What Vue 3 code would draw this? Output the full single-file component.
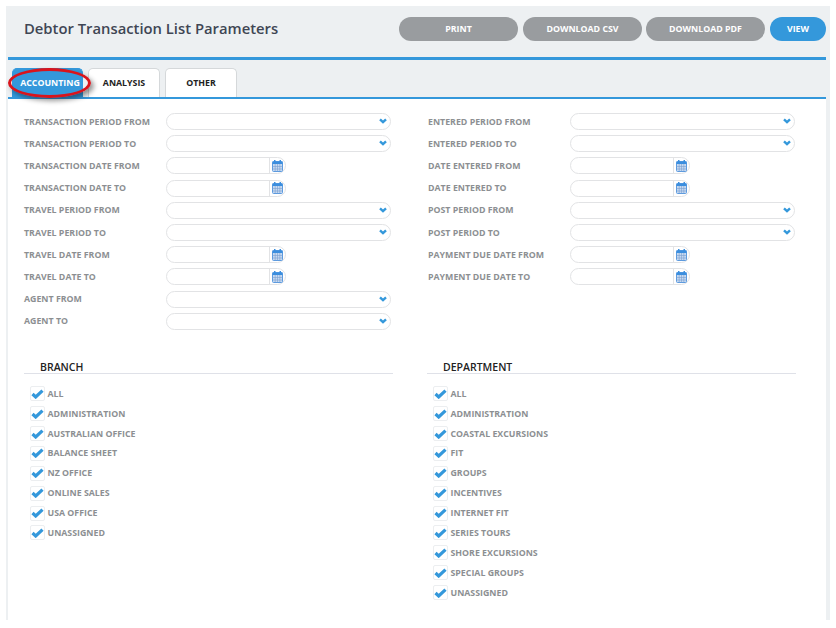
<script setup>
const leftFields = [
  ['TRANSACTION PERIOD FROM', 'select'], ['TRANSACTION PERIOD TO', 'select'],
  ['TRANSACTION DATE FROM', 'date'], ['TRANSACTION DATE TO', 'date'],
  ['TRAVEL PERIOD FROM', 'select'], ['TRAVEL PERIOD TO', 'select'],
  ['TRAVEL DATE FROM', 'date'], ['TRAVEL DATE TO', 'date'],
  ['AGENT FROM', 'select'], ['AGENT TO', 'select'],
]
const rightFields = [
  ['ENTERED PERIOD FROM', 'select'], ['ENTERED PERIOD TO', 'select'],
  ['DATE ENTERED FROM', 'date'], ['DATE ENTERED TO', 'date'],
  ['POST PERIOD FROM', 'select'], ['POST PERIOD TO', 'select'],
  ['PAYMENT DUE DATE FROM', 'date'], ['PAYMENT DUE DATE TO', 'date'],
]
const groups = [
  { title: 'BRANCH', items: ['ALL', 'ADMINISTRATION', 'AUSTRALIAN OFFICE', 'BALANCE SHEET', 'NZ OFFICE', 'ONLINE SALES', 'USA OFFICE', 'UNASSIGNED'] },
  { title: 'DEPARTMENT', items: ['ALL', 'ADMINISTRATION', 'COASTAL EXCURSIONS', 'FIT', 'GROUPS', 'INCENTIVES', 'INTERNET FIT', 'SERIES TOURS', 'SHORE EXCURSIONS', 'SPECIAL GROUPS', 'UNASSIGNED'] },
]
const columns = [leftFields, rightFields]
</script>

<template>
  <div class="page">
    <div class="panel">
      <header class="header">
        <h1 class="title">Debtor Transaction List Parameters</h1>
        <div class="actions">
          <button class="btn first">PRINT</button>
          <button class="btn">DOWNLOAD CSV</button>
          <button class="btn">DOWNLOAD PDF</button>
          <button class="btn view">VIEW</button>
        </div>
      </header>
      <nav class="tabs">
        <div class="tab active">ACCOUNTING</div>
        <div class="tab">ANALYSIS</div>
        <div class="tab">OTHER</div>
        <div class="ring"></div>
      </nav>
      <main class="content">
        <section class="fields">
          <div v-for="(col, c) in columns" :key="c" class="col">
            <div v-for="f in col" :key="f[0]" class="row">
              <label class="label">{{ f[0] }}</label>
              <div v-if="f[1] === 'select'" class="input select">
                <svg class="chev" viewBox="0 0 8 6" width="8" height="6"><path d="M1 1.4 4 4.2 7 1.4" fill="none" stroke="#3498db" stroke-width="2.4"/></svg>
              </div>
              <div v-else class="input date">
                <span class="cal">
                  <svg viewBox="0 0 11 12" width="11" height="12">
                    <rect x="0.5" y="1.5" width="10" height="10" rx="1" fill="#c5d9f1" stroke="#5a9ae0"/>
                    <rect x="0.5" y="1.5" width="10" height="2.5" fill="#3b8ede"/>
                    <rect x="2" y="0" width="1.5" height="3" fill="#3b8ede"/>
                    <rect x="7.5" y="0" width="1.5" height="3" fill="#3b8ede"/>
                    <path d="M0.5 6.5h10M0.5 9h10M3.2 4v7.5M5.5 4v7.5M7.8 4v7.5" stroke="#7b9fd0" stroke-width=".6"/>
                  </svg>
                </span>
              </div>
            </div>
          </div>
        </section>
        <section class="groups">
          <div v-for="g in groups" :key="g.title" class="group">
            <h2 class="group-title">{{ g.title }}</h2>
            <div v-for="item in g.items" :key="item" class="check">
              <span class="box">
                <svg viewBox="0 0 13 10" width="13" height="10"><path d="M1.5 5 4.7 8 11.5 1.6" fill="none" stroke="#3498db" stroke-width="3.2"/></svg>
              </span>
              <span class="check-label">{{ item }}</span>
            </div>
          </div>
        </section>
      </main>
    </div>
  </div>
</template>

<style>
html, body { margin: 0; background: #fff; }
</style>

<style scoped>
.page {
  width: 836px;
  height: 628px;
  padding: 6px 6px 8px 6px;
  box-sizing: border-box;
  overflow: hidden;
  background: #fff;
  font-family: "Open Sans", sans-serif;
}
.panel {
  height: 100%;
  background: #edf0f2;
  padding-left: 2px;
  padding-right: 4px;
  display: flex;
  flex-direction: column;
}
.header {
  height: 54px;
  box-sizing: border-box;
  border-bottom: 3px solid #3498db;
  display: flex;
  align-items: flex-start;
  justify-content: space-between;
  padding: 11px 0 0 16px;
}
.title {
  margin: 0;
  font-size: 14.8px;
  font-weight: 600;
  line-height: 22px;
  color: #3f4654;
}
.actions { display: flex; gap: 4px; }
.btn {
  width: 119px;
  height: 24px;
  border: 0;
  border-radius: 12px;
  background: #999c9f;
  color: #fff;
  font: 700 8.8px "Open Sans", sans-serif;
  padding: 0;
}
.btn.first { margin-right: 1px; }
.btn.view { width: 56px; background: #3498db; margin-left: 1px; }
.tabs {
  position: relative;
  height: 39px;
  box-sizing: border-box;
  border-bottom: 2px solid #3498db;
  display: flex;
  align-items: flex-end;
  gap: 5px;
  padding-left: 4px;
}
.tab {
  width: 72px;
  height: 29px;
  box-sizing: border-box;
  background: #fff;
  border: 1px solid #d5d8da;
  border-bottom: 0;
  border-radius: 5px 5px 0 0;
  color: #222;
  font-size: 8.8px;
  font-weight: 700;
  line-height: 28px;
  text-align: center;
}
.tab.active {
  width: 71px;
  padding-left: 5px;
  background: #3498db;
  border-color: #3498db;
  color: #fff;
}
.ring {
  position: absolute;
  left: 0;
  top: 8px;
  width: 83px;
  height: 30px;
  box-sizing: border-box;
  border: 3px solid #d9141c;
  border-radius: 50%;
  box-shadow: 3px 3px 5px rgba(0, 0, 0, .4);
}
.content { flex: 1; background: #fff; padding: 11.5px 0 0 16px; }
.fields { display: grid; grid-template-columns: 404px 1fr; height: 236px; }
.row { display: flex; align-items: center; height: 22.2px; }
.label {
  width: 142px;
  font-size: 8.8px;
  font-weight: 700;
  color: #8c8f92;
  white-space: nowrap;
}
.input {
  position: relative;
  height: 17px;
  box-sizing: border-box;
  border: 1px solid #e2e3e5;
  border-radius: 9px;
  background: #fff;
}
.select { width: 225px; }
.date { width: 120px; }
.chev { position: absolute; right: 3px; top: 4px; }
.cal {
  position: absolute;
  top: 0;
  right: 0;
  bottom: 0;
  width: 15px;
  border-left: 1px solid #e2e3e5;
  display: flex;
  align-items: center;
  justify-content: center;
}
.groups { display: grid; grid-template-columns: 403px 1fr; padding-top: 14.5px; }
.group-title {
  width: 369px;
  margin: 0 0 9.8px;
  height: 13px;
  box-sizing: border-box;
  padding-left: 16px;
  border-bottom: 1px solid #dfe1e8;
  font-size: 10.5px;
  font-weight: 600;
  line-height: 12px;
  color: #222;
}
.check { display: flex; align-items: center; height: 19.9px; padding-left: 5.5px; }
.box {
  width: 15px;
  height: 15px;
  box-sizing: border-box;
  border: 1px solid #eceef0;
  border-radius: 2px;
  display: flex;
  align-items: center;
  justify-content: center;
  margin-right: 3px;
}
.check-label { font-size: 8.8px; font-weight: 700; color: #8c8f92; }
</style>
